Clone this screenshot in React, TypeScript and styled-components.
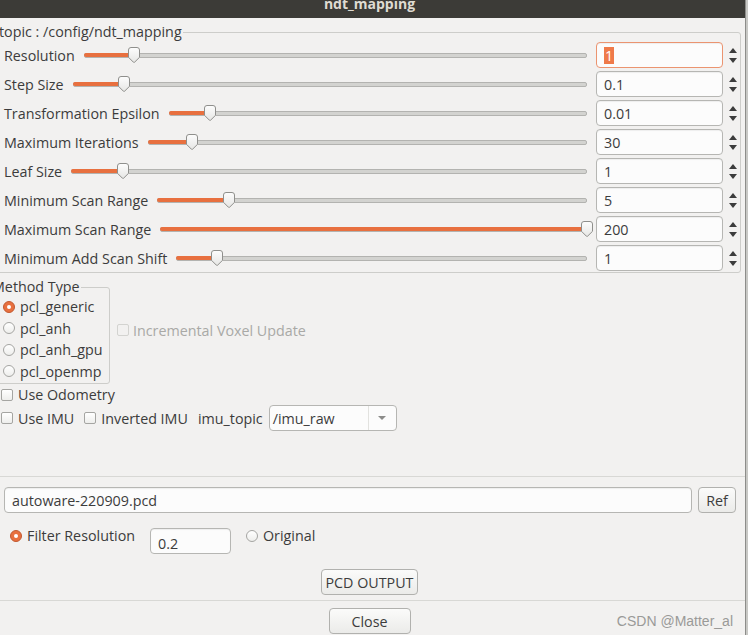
import React from "react";
import styled, { createGlobalStyle } from "styled-components";

const GlobalStyle = createGlobalStyle`
  html, body {
    margin: 0;
    padding: 0;
    background: #f2f1f0;
    overflow: hidden;
  }
  body {
    font-family: "Open Sans", "Noto Sans", sans-serif;
    font-size: 14.3px;
    color: #3c3c3c;
  }
`;

const ORANGE = "#e8703f";

const Screen = styled.div`
  display: flex;
  width: 748px;
  height: 635px;
`;

const Window = styled.div`
  position: relative;
  width: 745px;
  height: 635px;
  display: flex;
  flex-direction: column;
  background: #f2f1f0;
  overflow: hidden;
`;

const Edge = styled.div`
  flex: 1;
  background: #c8c8c5;
  border-left: 1px solid #8d8d8a;
`;

const TitleBar = styled.div`
  height: 18px;
  flex: none;
  background: #3c3b37;
  overflow: hidden;
  text-align: center;
`;

const TitleText = styled.div`
  margin-top: -6px;
  line-height: 19px;
  font-size: 14px;
  font-weight: bold;
  color: #dfdbd2;
  padding-right: 6px;
`;

const Upper = styled.div`
  flex: 1;
  display: flex;
  flex-direction: column;
`;

const Group = styled.fieldset`
  margin: 4px 4px 0 -6px;
  padding: 0 2px 1px 9px;
  border: 1px solid #cdcdca;
  border-radius: 3px;
  min-width: 0;
`;

const Legend = styled.legend`
  margin-left: -5px;
  padding: 0 1px 0 0;
  line-height: 20px;
`;

const Rows = styled.div`
  display: flex;
  flex-direction: column;
  gap: 3px;
`;

const Row = styled.div`
  display: flex;
  align-items: center;
  height: 26px;
`;

const Label = styled.span`
  white-space: nowrap;
`;

const Slider = styled.div`
  position: relative;
  flex: 1;
  height: 16px;
  margin: 0 9px;
`;

const Track = styled.div`
  position: absolute;
  left: 0;
  right: 0;
  top: 6px;
  height: 3px;
  background: #d3d3d0;
  border: 1px solid #b3b3b0;
  border-radius: 2px;
`;

const Fill = styled.div`
  position: absolute;
  left: 0;
  top: 6px;
  height: 4px;
  background: ${ORANGE};
  border-radius: 2px;
`;

const Thumb = styled.svg`
  position: absolute;
  top: 0;
  margin-left: -6px;
`;

const SpinBox = styled.div<{ $focus?: boolean }>`
  box-sizing: border-box;
  width: 127px;
  height: 26px;
  flex: none;
  display: flex;
  align-items: center;
  padding-left: 7px;
  background: #fcfcfc;
  border: 1px solid ${(p) => (p.$focus ? "#eb9470" : "#b6b6b3")};
  border-radius: 4px;
  box-shadow: inset 0 1px 1px rgba(0, 0, 0, 0.06);
`;

const Selected = styled.span`
  background: #ef7a4a;
  color: #fff;
  padding: 0 1px;
  line-height: 17px;
`;

const Arrows = styled.div`
  width: 10px;
  margin-left: 5px;
  display: flex;
  flex-direction: column;
  align-items: center;
  gap: 5px;
`;

const Middle = styled.div`
  display: flex;
  align-items: center;
`;

const MethodGroup = styled.fieldset`
  box-sizing: border-box;
  width: 116px;
  margin: 4px 0 0 -6px;
  padding: 0 0 0 8px;
  border: 1px solid #cdcdca;
  border-radius: 3px;
  min-width: 0;
`;

const MethodLegend = styled.legend`
  margin-left: -11px;
  padding: 0 1px 0 0;
  line-height: 20px;
`;

const RadioRow = styled.label`
  display: flex;
  align-items: center;
  gap: 5px;
  height: 21.5px;
  margin-top: -1px;
  margin-bottom: 1px;
  white-space: nowrap;
`;

const Radio = styled.span<{ $checked?: boolean }>`
  box-sizing: border-box;
  width: 12px;
  height: 12px;
  flex: none;
  border-radius: 50%;
  border: 1px solid ${(p) => (p.$checked ? "#c25a31" : "#a5a5a2")};
  background: ${(p) => (p.$checked ? ORANGE : "linear-gradient(#ffffff, #eeeeec)")};
  display: flex;
  align-items: center;
  justify-content: center;
  &::after {
    content: "";
    width: 4px;
    height: 4px;
    border-radius: 50%;
    background: #fff;
    display: ${(p) => (p.$checked ? "block" : "none")};
  }
`;

const Check = styled.span<{ $disabled?: boolean }>`
  box-sizing: border-box;
  width: 12px;
  height: 12px;
  flex: none;
  border-radius: 2px;
  border: 1px solid ${(p) => (p.$disabled ? "#d3d3d0" : "#a5a5a2")};
  background: ${(p) => (p.$disabled ? "#f2f1f0" : "linear-gradient(#ffffff, #eeeeec)")};
`;

const CheckLabel = styled.label<{ $disabled?: boolean }>`
  display: flex;
  align-items: center;
  gap: 5px;
  white-space: nowrap;
  color: ${(p) => (p.$disabled ? "#a9a9a6" : "inherit")};
`;

const Incremental = styled(CheckLabel)`
  margin: 3px 0 0 7px;
  gap: 4px;
`;

const OptionRow = styled.div<{ $h: number }>`
  display: flex;
  align-items: center;
  height: ${(p) => p.$h}px;
  padding-left: 1px;
  gap: 10px;
`;

const Combo = styled.div`
  box-sizing: border-box;
  width: 128px;
  height: 26px;
  margin-left: -4px;
  display: flex;
  background: #fcfcfc;
  border: 1px solid #b6b6b3;
  border-radius: 4px;
`;

const ComboText = styled.span`
  flex: 1;
  padding-left: 3px;
  display: flex;
  align-items: center;
`;

const ComboButton = styled.span`
  width: 27px;
  border-left: 1px solid #e2e2df;
  display: flex;
  align-items: center;
  justify-content: center;
`;

const Lower = styled.div`
  height: 124px;
  flex: none;
  border-top: 1px solid #d8d8d5;
  padding-top: 10px;
  box-sizing: border-box;
  display: flex;
  flex-direction: column;
  gap: 15px;
`;

const FileRow = styled.div`
  display: flex;
  gap: 6px;
  padding: 0 9px 0 4px;
`;

const TextField = styled.div<{ $w?: number }>`
  box-sizing: border-box;
  height: 26px;
  ${(p) => (p.$w ? `width: ${p.$w}px;` : "flex: 1;")}
  padding-left: 7px;
  display: flex;
  align-items: center;
  background: #fcfcfc;
  border: 1px solid #b6b6b3;
  border-radius: 4px;
  box-shadow: inset 0 1px 1px rgba(0, 0, 0, 0.06);
`;

const Button = styled.button<{ $w: number }>`
  box-sizing: border-box;
  width: ${(p) => p.$w}px;
  height: 26px;
  padding: 0;
  font: inherit;
  color: #3c3c3c;
  background: linear-gradient(#fbfbfa, #ebebe9);
  border: 1px solid #b1b1ae;
  border-radius: 4px;
`;

const FilterRow = styled.div`
  display: flex;
  align-items: flex-start;
  height: 26px;
  padding-left: 10px;
`;

const FilterOption = styled.label`
  display: flex;
  align-items: center;
  gap: 5px;
  height: 17px;
  margin: -1px 15px 0 0;
  white-space: nowrap;
`;

const FilterInput = styled(TextField)`
  margin: 0 15px 0 0;
  padding-top: 5px;
`;

const CenterRow = styled.div`
  display: flex;
  justify-content: center;
  padding-right: 6px;
`;

const BottomBar = styled.div`
  height: 35px;
  flex: none;
  box-sizing: border-box;
  border-top: 1px solid #d8d8d5;
  padding-top: 7px;
`;

const Watermark = styled.span`
  position: absolute;
  right: 12px;
  bottom: 6px;
  font-family: "Liberation Sans", Arial, sans-serif;
  font-size: 14px;
  color: #9a9a98;
`;

type Param = { label: string; value: string; min: number; max: number; focus?: boolean };

const params: Param[] = [
  { label: "Resolution", value: "1", min: 0, max: 10, focus: true },
  { label: "Step Size", value: "0.1", min: 0, max: 1 },
  { label: "Transformation Epsilon", value: "0.01", min: 0, max: 0.1 },
  { label: "Maximum Iterations", value: "30", min: 0, max: 300 },
  { label: "Leaf Size", value: "1", min: 0, max: 10 },
  { label: "Minimum Scan Range", value: "5", min: 0, max: 30 },
  { label: "Maximum Scan Range", value: "200", min: 0, max: 200 },
  { label: "Minimum Add Scan Shift", value: "1", min: 0, max: 10 },
];

function ThumbIcon({ pos }: { pos: number }) {
  return (
    <Thumb width="12" height="16" viewBox="0 0 12 16" style={{ left: `${pos * 100}%` }}>
      <defs>
        <linearGradient id="tg" x1="0" y1="0" x2="0" y2="1">
          <stop offset="0" stopColor="#fdfdfd" />
          <stop offset="1" stopColor="#e6e6e4" />
        </linearGradient>
      </defs>
      <path
        d="M3 0.5 H9 Q11.5 0.5 11.5 3 V10.3 L6.6 15.2 Q6 15.7 5.4 15.2 L0.5 10.3 V3 Q0.5 0.5 3 0.5 Z"
        fill="url(#tg)"
        stroke="#8f8f8c"
      />
    </Thumb>
  );
}

function SpinArrows() {
  return (
    <Arrows>
      <svg width="8" height="5" viewBox="0 0 8 5">
        <path d="M4 0 L8 5 H0 Z" fill="#3c3c3c" />
      </svg>
      <svg width="8" height="5" viewBox="0 0 8 5">
        <path d="M0 0 H8 L4 5 Z" fill="#3c3c3c" />
      </svg>
    </Arrows>
  );
}

function ParamRow({ p }: { p: Param }) {
  const pos = (Number(p.value) - p.min) / (p.max - p.min);
  return (
    <Row>
      <Label>{p.label}</Label>
      <Slider>
        <Track />
        <Fill style={{ width: `${pos * 100}%` }} />
        <ThumbIcon pos={pos} />
      </Slider>
      <SpinBox $focus={p.focus}>{p.focus ? <Selected>{p.value}</Selected> : p.value}</SpinBox>
      <SpinArrows />
    </Row>
  );
}

export default function App() {
  return (
    <Screen>
      <GlobalStyle />
      <Window>
        <TitleBar>
          <TitleText>ndt_mapping</TitleText>
        </TitleBar>
        <Upper>
          <Group>
            <Legend>topic : /config/ndt_mapping</Legend>
            <Rows>
              {params.map((p) => (
                <ParamRow key={p.label} p={p} />
              ))}
            </Rows>
          </Group>
          <Middle>
            <MethodGroup>
              <MethodLegend>Method Type</MethodLegend>
              {["pcl_generic", "pcl_anh", "pcl_anh_gpu", "pcl_openmp"].map((m, i) => (
                <RadioRow key={m}>
                  <Radio $checked={i === 0} />
                  {m}
                </RadioRow>
              ))}
            </MethodGroup>
            <Incremental $disabled>
              <Check $disabled />
              Incremental Voxel Update
            </Incremental>
          </Middle>
          <OptionRow $h={21}>
            <CheckLabel>
              <Check />
              Use Odometry
            </CheckLabel>
          </OptionRow>
          <OptionRow $h={26}>
            <CheckLabel>
              <Check />
              Use IMU
            </CheckLabel>
            <CheckLabel>
              <Check />
              Inverted IMU
            </CheckLabel>
            <Label>imu_topic</Label>
            <Combo>
              <ComboText>/imu_raw</ComboText>
              <ComboButton>
                <svg width="8" height="4" viewBox="0 0 8 4">
                  <path d="M0 0 H8 L4 4 Z" fill="#8c8c8a" />
                </svg>
              </ComboButton>
            </Combo>
          </OptionRow>
        </Upper>
        <Lower>
          <FileRow>
            <TextField>autoware-220909.pcd</TextField>
            <Button $w={38}>Ref</Button>
          </FileRow>
          <FilterRow>
            <FilterOption>
              <Radio $checked />
              Filter Resolution
            </FilterOption>
            <FilterInput $w={81}>0.2</FilterInput>
            <FilterOption>
              <Radio />
              Original
            </FilterOption>
          </FilterRow>
          <CenterRow>
            <Button $w={97}>PCD OUTPUT</Button>
          </CenterRow>
        </Lower>
        <BottomBar>
          <CenterRow>
            <Button $w={82}>Close</Button>
          </CenterRow>
        </BottomBar>
        <Watermark>CSDN @Matter_al</Watermark>
      </Window>
      <Edge />
    </Screen>
  );
}
